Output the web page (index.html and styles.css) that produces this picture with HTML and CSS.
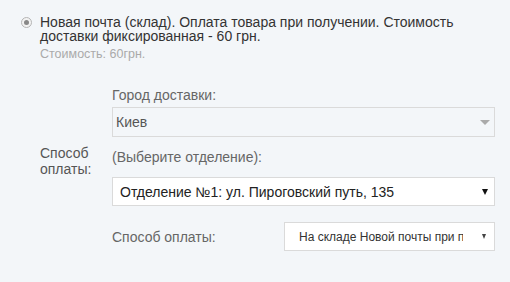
FILE: index.html
```html
<!DOCTYPE html>
<html>
<head>
<meta charset="utf-8">
<link rel="stylesheet" href="styles.css">
</head>
<body>
<div class="page">
  <div class="option">
    <span class="radio"><span class="dot"></span></span>
    <div class="option-body">
      <div class="option-title">Новая почта (склад). Оплата товара при получении. Стоимость доставки фиксированная - 60 грн.</div>
      <div class="option-price">Стоимость: 60грн.</div>
    </div>
  </div>
  <div class="form">
    <div class="side"></div>
    <div class="main row-city">
      <div class="field-label">Город доставки:</div>
      <div class="select disabled"><span>Киев</span><span class="caret caret-light"></span></div>
    </div>
    <div class="side side-label">Способ оплаты:</div>
    <div class="main row-branch">
      <div class="field-label">(Выберите отделение):</div>
      <div class="select"><span>Отделение №1: ул. Пироговский путь, 135</span><span class="caret"></span></div>
    </div>
    <div class="side"></div>
    <div class="main pay-row">
      <div class="field-label inline">Способ оплаты:</div>
      <div class="select small"><span class="clip">На складе Новой почты при получении</span><span class="caret caret-sm"></span></div>
    </div>
  </div>
</div>
</body>
</html>
```

FILE: styles.css
```css
html, body {
  margin: 0;
  padding: 0;
  background: #f3f6f9;
}
body {
  width: 510px;
  height: 282px;
  overflow: hidden;
  font-family: "Liberation Sans", Arial, sans-serif;
  color: #333;
}
.page {
  padding: 15px 0 0 21px;
}
.option {
  display: flex;
  align-items: flex-start;
}
.radio {
  box-sizing: border-box;
  width: 11px;
  height: 11px;
  border: 1px solid #b5b5b5;
  border-radius: 50%;
  background: #f2f2f2;
  margin-top: 2px;
  display: flex;
  align-items: center;
  justify-content: center;
  flex: none;
}
.dot {
  width: 5px;
  height: 5px;
  border-radius: 50%;
  background: #888;
}
.option-body {
  margin-left: 8px;
  width: 454px;
}
.option-title {
  font-size: 14px;
  line-height: 14px;
  color: #333;
}
.option-price {
  font-size: 12.5px;
  line-height: 14px;
  color: #aaa;
  margin-top: 4px;
}
.form {
  display: grid;
  grid-template-columns: 72px 383px;
  margin: 26px 0 0 19px;
}
.side-label {
  font-size: 14px;
  line-height: 16px;
  color: #555;
  margin-top: -4px;
}
.field-label {
  font-size: 14px;
  line-height: 16px;
  color: #666;
}
.row-city {
  padding-bottom: 12px;
}
.row-city .field-label {
  margin-bottom: 4px;
}
.row-branch {
  padding-bottom: 16px;
}
.row-branch .field-label {
  margin-bottom: 12px;
}
.select {
  box-sizing: border-box;
  height: 29px;
  border: 1px solid #dadada;
  background: #fff;
  display: flex;
  align-items: center;
  justify-content: space-between;
  padding: 0 6px 0 7px;
  font-size: 14px;
  color: #222;
}
.select.disabled {
  height: 30px;
  background: #f3f6f9;
  color: #555;
  padding: 0 4px 0 3px;
}
.caret {
  width: 0;
  height: 0;
  border-left: 3px solid transparent;
  border-right: 3px solid transparent;
  border-top: 6px solid #111;
  flex: none;
}
.caret-light {
  border-left-width: 5.5px;
  border-right-width: 5.5px;
  border-top: 5px solid #aaa;
}
.caret-sm {
  border-left-width: 2.5px;
  border-right-width: 2.5px;
  border-top: 5px solid #444;
  margin-right: 2px;
}
.pay-row {
  display: flex;
  align-items: center;
  justify-content: space-between;
}
.select.small {
  width: 211px;
  font-size: 12px;
  color: #333;
  padding-left: 14px;
}
.clip {
  width: 164px;
  overflow: hidden;
  white-space: nowrap;
  display: block;
}
```
